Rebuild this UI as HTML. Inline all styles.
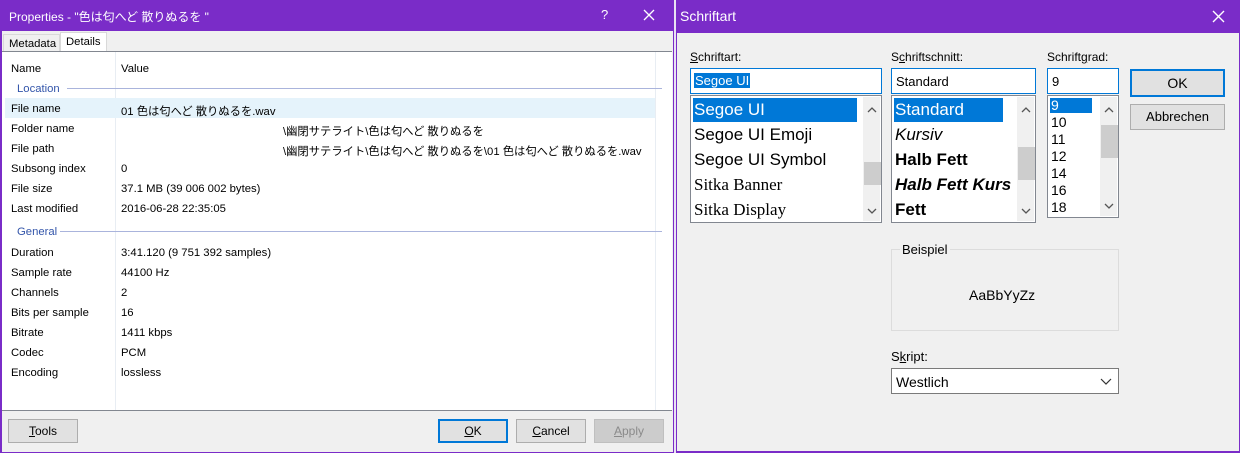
<!DOCTYPE html>
<html><head><meta charset="utf-8"><style>
*{margin:0;padding:0;box-sizing:border-box}
body{width:1240px;height:453px;background:#7a2cc8;position:relative;overflow:hidden;font-family:"Liberation Sans","Noto Sans CJK JP",sans-serif;font-size:12px;color:#000}
.a{position:absolute}
.t{color:#fff;font-size:12px}
.L{font-size:11.3px}
.row{position:absolute;left:0;height:20px;width:100%}
.k{position:absolute;left:9px;top:5px;white-space:nowrap}
.v{position:absolute;left:119px;top:5px;white-space:nowrap}
.btn{position:absolute;background:#e1e1e1;border:1px solid #adadad;text-align:center;line-height:22px;font-size:12px}
.sec{position:absolute;left:15px;color:#3355aa;}
.box{position:absolute;background:#fff;border:1px solid #828790}
.li{position:absolute;left:2px;font-size:17px;white-space:nowrap;height:24px;line-height:24px;padding-left:1px}
.sb{position:absolute;top:1px;bottom:1px;width:17px;background:#f0f0f0}
</style></head><body>
<div class="a t" style="left:9px;top:8px">Properties - "色は匂へど 散りぬるを "</div>
<div class="a t" style="left:601px;top:7px;font-size:13px">?</div>
<svg class="a" style="left:643px;top:9px" width="12" height="12"><path d="M1 1L11 11M11 1L1 11" stroke="#fff" stroke-width="1.3"/></svg>
<div class="a" style="left:2px;top:31px;width:671px;height:421px;background:#f0f0f0"></div>
<div class="a" style="left:3px;top:34px;width:57px;height:18px;border:1px solid #d9d9d9;border-bottom:none;background:#f0f0f0"></div>
<div class="a L" style="left:9px;top:38px">Metadata</div>
<div class="a" style="left:60px;top:32px;width:47px;height:20px;border:1px solid #d9d9d9;border-bottom:none;background:#fff"></div>
<div class="a L" style="left:66px;top:36px">Details</div>
<div class="a L" style="left:2px;top:51px;width:670px;height:360px;background:#fff;border-top:1px solid #828790;border-bottom:1px solid #828790">
 <div class="a" style="left:113px;top:0;width:1px;height:358px;background:#e8edf3"></div>
 <div class="a" style="left:653px;top:0;width:1px;height:358px;background:#e8edf3"></div>
 <div class="row" style="top:6px"><span class="k">Name</span><span class="v">Value</span></div>
 <div class="sec" style="top:31px">Location</div><div class="a" style="left:65px;top:36px;width:595px;height:1px;background:#aab4dc"></div>
 <div class="row" style="top:46px;background:#e5f3fb;left:3px;width:650px"><span class="k" style="left:6px">File name</span><span class="v" style="left:116px">01 色は匂へど 散りぬるを.wav</span></div>
 <div class="row" style="top:66px"><span class="k">Folder name</span><span class="v" style="left:281px">\幽閉サテライト\色は匂へど 散りぬるを</span></div>
 <div class="row" style="top:86px"><span class="k">File path</span><span class="v" style="left:281px">\幽閉サテライト\色は匂へど 散りぬるを\01 色は匂へど 散りぬるを.wav</span></div>
 <div class="row" style="top:106px"><span class="k">Subsong index</span><span class="v">0</span></div>
 <div class="row" style="top:126px"><span class="k">File size</span><span class="v">37.1 MB (39 006 002 bytes)</span></div>
 <div class="row" style="top:146px"><span class="k">Last modified</span><span class="v">2016-06-28 22:35:05</span></div>
 <div class="sec" style="top:174px">General</div><div class="a" style="left:58px;top:179px;width:602px;height:1px;background:#aab4dc"></div>
 <div class="row" style="top:190px"><span class="k">Duration</span><span class="v">3:41.120 (9 751 392 samples)</span></div>
 <div class="row" style="top:210px"><span class="k">Sample rate</span><span class="v">44100 Hz</span></div>
 <div class="row" style="top:230px"><span class="k">Channels</span><span class="v">2</span></div>
 <div class="row" style="top:250px"><span class="k">Bits per sample</span><span class="v">16</span></div>
 <div class="row" style="top:270px"><span class="k">Bitrate</span><span class="v">1411 kbps</span></div>
 <div class="row" style="top:290px"><span class="k">Codec</span><span class="v">PCM</span></div>
 <div class="row" style="top:310px"><span class="k">Encoding</span><span class="v">lossless</span></div>
</div>
<div class="btn L" style="left:8px;top:419px;width:70px;height:24px"><u>T</u>ools</div>
<div class="btn L" style="left:438px;top:419px;width:70px;height:24px;border:2px solid #0078d7;line-height:20px"><u>O</u>K</div>
<div class="btn L" style="left:516px;top:419px;width:70px;height:24px"><u>C</u>ancel</div>
<div class="btn L" style="left:594px;top:419px;width:70px;height:24px;background:#ccc;border-color:#bfbfbf;color:#8a8a8a"><u>A</u>pply</div>
<div class="a" style="left:674px;top:0;width:2px;height:453px;background:#e9e2f3"></div>
<div class="a t" style="left:680px;top:8px;font-size:14px">Schriftart</div>
<svg class="a" style="left:1212px;top:10px" width="13" height="13"><path d="M1 1L12 12M12 1L1 12" stroke="#fff" stroke-width="1.4"/></svg>
<div class="a" style="left:677px;top:33px;width:562px;height:418px;background:#f0f0f0"></div>
<div class="a" style="left:690px;top:50px"><u>S</u>chriftart:</div>
<div class="a" style="left:891px;top:50px">S<u>c</u>hriftschnitt:</div>
<div class="a" style="left:1047px;top:50px">Schrift<u>g</u>rad:</div>
<div class="box" style="left:690px;top:68px;width:192px;height:26px;border-color:#0078d7"><span class="a" style="left:3px;top:4px;background:#0078d7;color:#fff;padding:0 1px;font-size:13px">Segoe UI</span></div>
<div class="box" style="left:891px;top:68px;width:145px;height:26px;border-color:#0078d7"><span class="a" style="left:4px;top:5px;font-size:13px">Standard</span></div>
<div class="box" style="left:1047px;top:68px;width:72px;height:26px;border-color:#0078d7"><span class="a" style="left:4px;top:5px;font-size:13px">9</span></div>
<div class="box" style="left:690px;top:95px;width:192px;height:128px">
 <div class="li" style="top:2px;width:164px;background:#0078d7;color:#fff">Segoe UI</div>
 <div class="li" style="top:27px">Segoe UI Emoji</div>
 <div class="li" style="top:52px">Segoe UI Symbol</div>
 <div class="li" style="top:77px;font-family:'Liberation Serif',serif">Sitka Banner</div>
 <div class="li" style="top:102px;font-family:'Liberation Serif',serif">Sitka Display</div>
 <div class="sb" style="right:1px"><svg class="a" style="left:4px;top:10px" width="10" height="6"><path d="M1 5L5 1L9 5" stroke="#555" fill="none" stroke-width="1.3"/></svg><div class="a" style="left:1px;top:65px;width:17px;height:23px;background:#cdcdcd"></div><svg class="a" style="left:4px;top:111px" width="10" height="6"><path d="M1 1L5 5L9 1" stroke="#555" fill="none" stroke-width="1.3"/></svg></div>
</div>
<div class="box" style="left:891px;top:95px;width:145px;height:128px">
 <div class="li" style="top:2px;width:109px;background:#0078d7;color:#fff">Standard</div>
 <div class="li" style="top:27px;font-style:italic">Kursiv</div>
 <div class="li" style="top:52px;font-weight:bold">Halb Fett</div>
 <div class="li" style="top:77px;font-weight:bold;font-style:italic;width:117px;overflow:hidden">Halb Fett Kurs</div>
 <div class="li" style="top:102px;font-weight:bold">Fett</div>
 <div class="sb" style="right:1px"><svg class="a" style="left:4px;top:10px" width="10" height="6"><path d="M1 5L5 1L9 5" stroke="#555" fill="none" stroke-width="1.3"/></svg><div class="a" style="left:1px;top:50px;width:17px;height:33px;background:#cdcdcd"></div><svg class="a" style="left:4px;top:111px" width="10" height="6"><path d="M1 1L5 5L9 1" stroke="#555" fill="none" stroke-width="1.3"/></svg></div>
</div>
<div class="box" style="left:1047px;top:95px;width:72px;height:123px">
 <div class="a" style="left:2px;top:2px;width:42px;height:15px;background:#0078d7"></div>
 <div class="a" style="left:3px;top:1px;font-size:14px;line-height:17px;color:#000"><span style="color:#fff">9</span><br>10<br>11<br>12<br>14<br>16<br>18</div>
 <div class="sb" style="right:1px"><svg class="a" style="left:4px;top:10px" width="10" height="6"><path d="M1 5L5 1L9 5" stroke="#555" fill="none" stroke-width="1.3"/></svg><div class="a" style="left:1px;top:28px;width:17px;height:33px;background:#cdcdcd"></div><svg class="a" style="left:4px;top:106px" width="10" height="6"><path d="M1 1L5 5L9 1" stroke="#555" fill="none" stroke-width="1.3"/></svg></div>
</div>
<div class="btn" style="left:1130px;top:69px;width:95px;height:28px;border:2px solid #0078d7;line-height:24px;font-size:14px">OK</div>
<div class="btn" style="left:1130px;top:104px;width:95px;height:26px;line-height:24px;font-size:13px">Abbrechen</div>
<div class="a" style="left:891px;top:249px;width:228px;height:82px;border:1px solid #dcdcdc"></div>
<div class="a" style="left:900px;top:242px;background:#f0f0f0;padding:0 2px;font-size:13px">Beispiel</div>
<div class="a" style="left:969px;top:287px;font-size:14px">AaBbYyZz</div>
<div class="a" style="left:891px;top:349px;font-size:13px">S<u>k</u>ript:</div>
<div class="box" style="left:891px;top:368px;width:228px;height:26px;border-color:#7a7a7a"><span class="a" style="left:4px;top:5px;font-size:14px">Westlich</span><svg class="a" style="left:208px;top:9px" width="12" height="8"><path d="M1 1L6 6L11 1" stroke="#333" fill="none" stroke-width="1.2"/></svg></div>
</body></html>
